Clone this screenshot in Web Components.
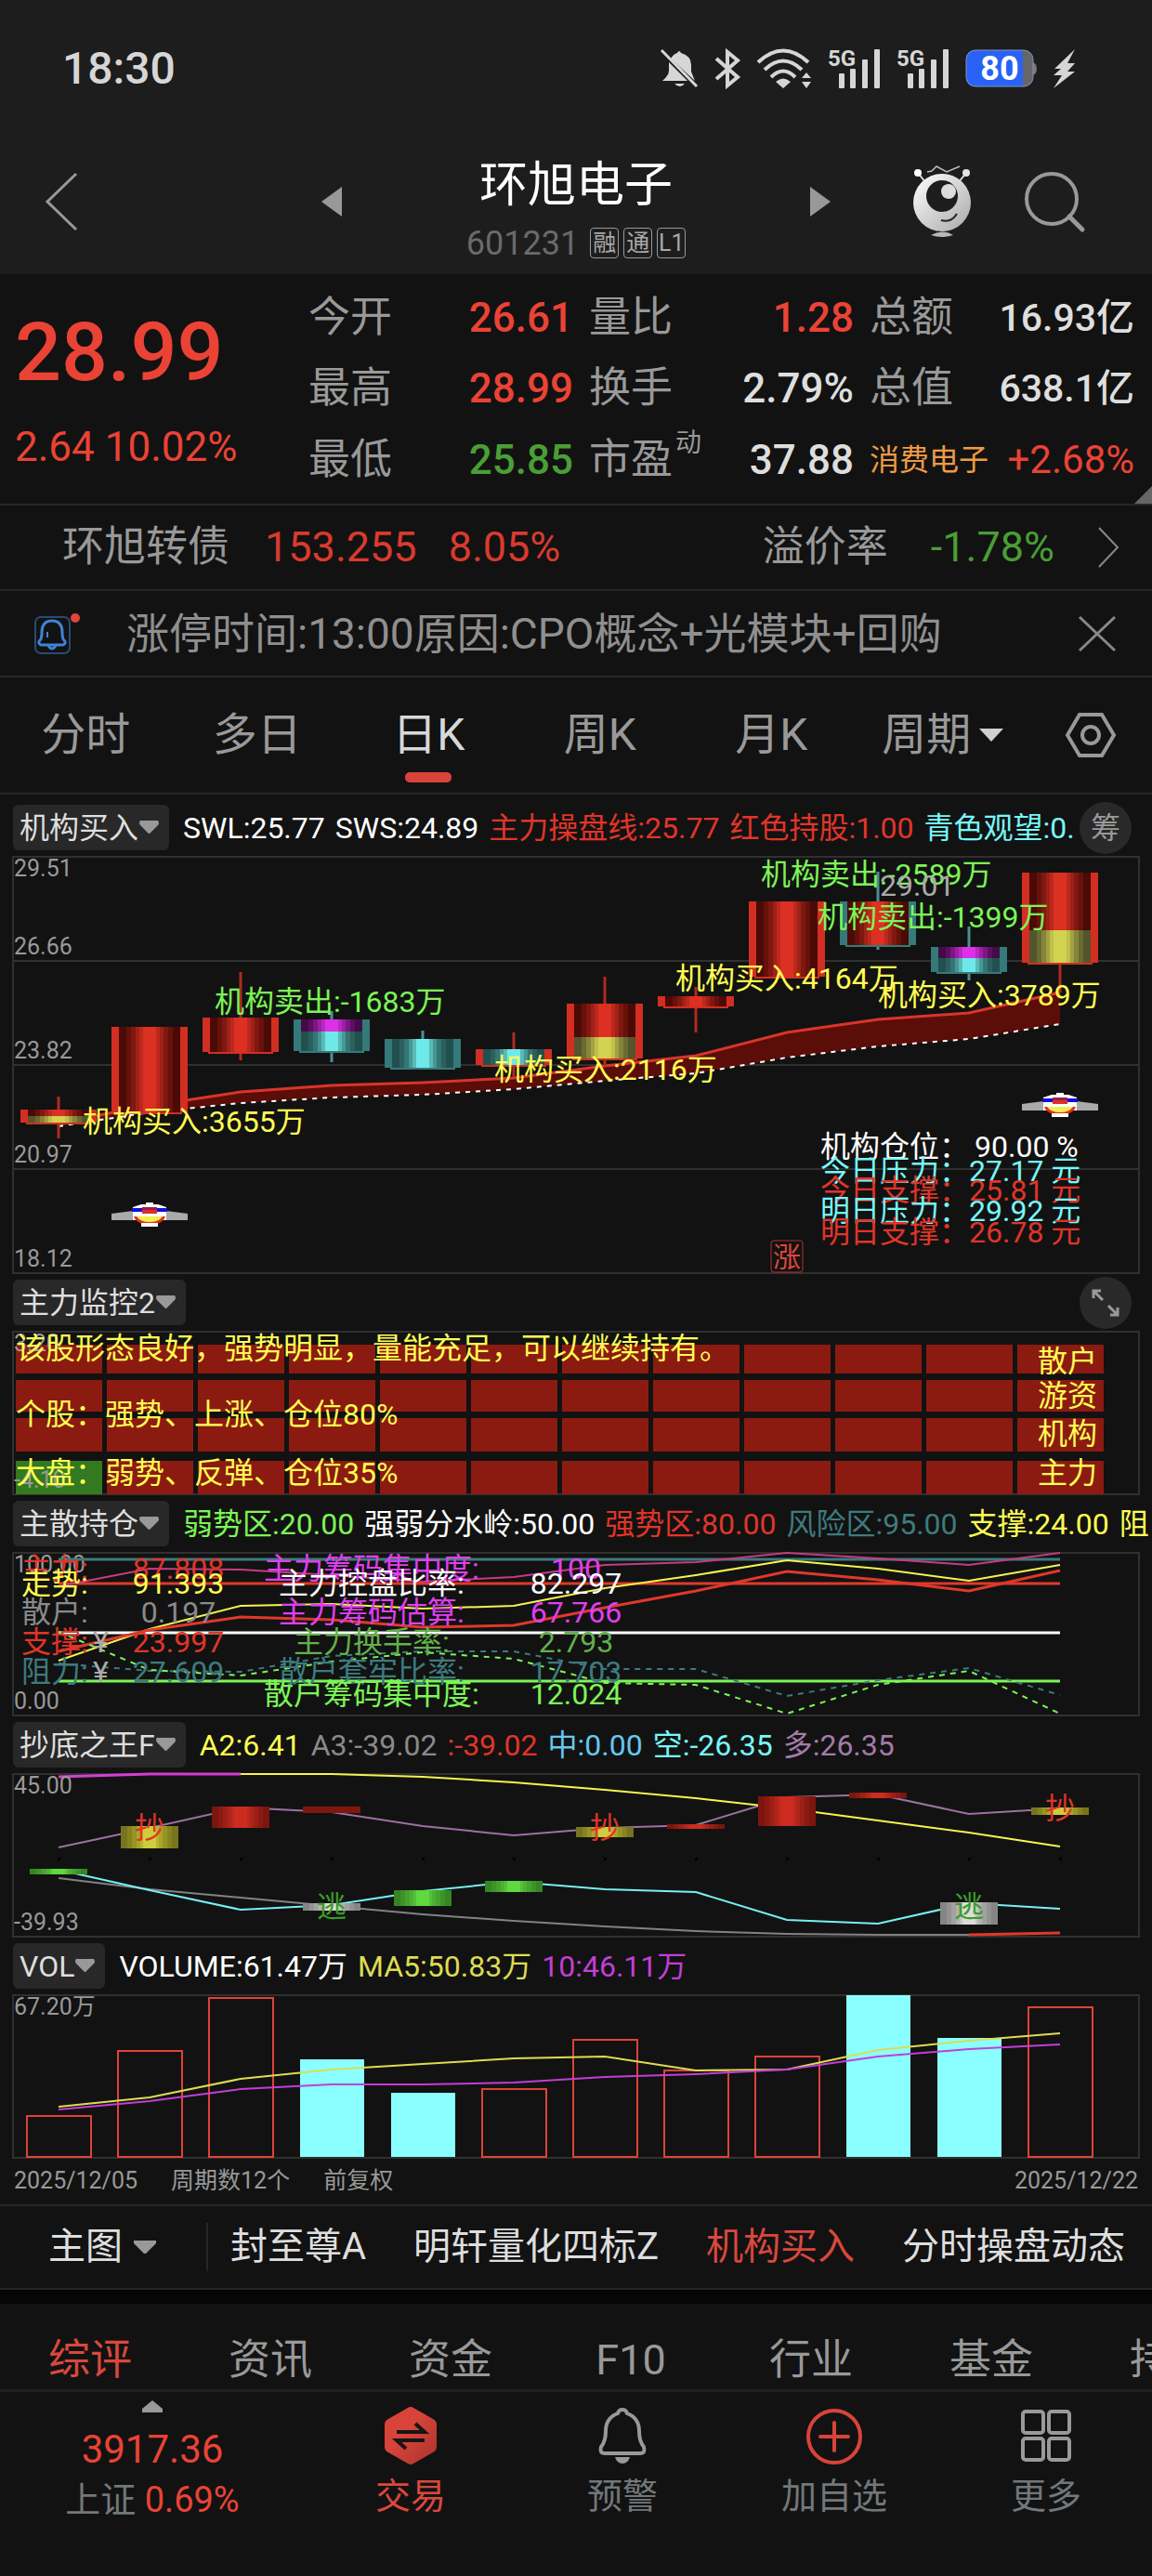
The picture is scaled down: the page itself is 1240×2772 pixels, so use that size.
<!DOCTYPE html>
<html lang="zh-CN">
<head>
<meta charset="utf-8">
<meta name="viewport" content="width=device-width, initial-scale=1">
<title>环旭电子 601231</title>
<style>
  html {
    background: #121212;
  }
  body {
    margin: 0;
    min-height: 100vh;
    overflow-x: hidden;
    color: #dedede;
    background: #121212;
    font-family: Roboto, "Noto Sans CJK SC", sans-serif;
    --up: #ea4335;
    --down: #4a9e35;
    --muted: #999;
    --line: #262626;
  }
  .white { color: #fff; }
  .red { color: #e03529; }
  .cyan { color: #77f7f9; }
  .yellow { color: #fffd54; }
  .green { color: #7cf557; }
  .teal { color: #3d7b7e; }
  .grey { color: #8a8a8a; }
  .blue { color: #66c8ee; }
  .mauve { color: #a47aa8; }
  .ma5 { color: #dddc52; }
  .ma10 { color: #c13fd6; }
</style>
</head>
<body>

<status-bar time="18:30" battery="80"></status-bar>
<title-bar code="601231">环旭电子</title-bar>

<quote-board price="28.99" change="2.64 10.02%">
  <quote-cell label="今开" trend="up">26.61</quote-cell>
  <quote-cell label="量比" trend="up">1.28</quote-cell>
  <quote-cell label="总额" amount>16.93亿</quote-cell>
  <quote-cell label="最高" trend="up">28.99</quote-cell>
  <quote-cell label="换手">2.79%</quote-cell>
  <quote-cell label="总值" amount>638.1亿</quote-cell>
  <quote-cell label="最低" trend="down">25.85</quote-cell>
  <quote-cell label="市盈" mark="动">37.88</quote-cell>
  <quote-cell label="消费电子" trend="up" sector>+2.68%</quote-cell>
</quote-board>

<bond-strip></bond-strip>
<notice-strip>涨停时间:13:00原因:CPO概念+光模块+回购</notice-strip>
<period-tabs></period-tabs>

<main>
  <indicator-panel name="机构买入" main>
    <span slot="legend" class="white">SWL:25.77</span>
    <span slot="legend" class="white">SWS:24.89</span>
    <span slot="legend" class="red">主力操盘线:25.77</span>
    <span slot="legend" class="red">红色持股:1.00</span>
    <span slot="legend" class="cyan">青色观望:0.</span>
    <round-button slot="action" label="筹码分布">筹</round-button>
    <candle-chart></candle-chart>
  </indicator-panel>

  <indicator-panel name="主力监控2">
    <round-button slot="action" label="全屏"></round-button>
    <monitor-chart></monitor-chart>
  </indicator-panel>

  <indicator-panel name="主散持仓">
    <span slot="legend" class="green">弱势区:20.00</span>
    <span slot="legend" class="white">强弱分水岭:50.00</span>
    <span slot="legend" class="red">强势区:80.00</span>
    <span slot="legend" class="teal">风险区:95.00</span>
    <span slot="legend" class="yellow">支撑:24.00</span>
    <span slot="legend" class="yellow">阻</span>
    <holding-chart></holding-chart>
  </indicator-panel>

  <indicator-panel name="抄底之王F">
    <span slot="legend" class="yellow">A2:6.41</span>
    <span slot="legend" class="grey">A3:-39.02</span>
    <span slot="legend" class="red">:-39.02</span>
    <span slot="legend" class="blue">中:0.00</span>
    <span slot="legend" class="cyan">空:-26.35</span>
    <span slot="legend" class="mauve">多:26.35</span>
    <bottom-chart></bottom-chart>
  </indicator-panel>

  <indicator-panel name="VOL">
    <span slot="legend" class="white">VOLUME:61.47万</span>
    <span slot="legend" class="ma5">MA5:50.83万</span>
    <span slot="legend" class="ma10">10:46.11万</span>
    <volume-chart></volume-chart>
  </indicator-panel>

  <date-range from="2025/12/05" to="2025/12/22">
    <span>周期数12个</span>
    <span>前复权</span>
  </date-range>
</main>

<indicator-switch></indicator-switch>
<info-tabs></info-tabs>
<bottom-nav></bottom-nav>

<script>
  (function() {

    const RESET = `
      :host, * { box-sizing: border-box; }
      button, a {
        margin: 0; padding: 0; border: 0;
        background: none; color: inherit;
        font: inherit; text-decoration: none; white-space: nowrap;
      }
      svg { display: block; flex: none; overflow: visible; }
    `;

    // base class: renders css() and html() into an open shadow root
    class BaseElement extends HTMLElement {
      connectedCallback() {
        if (this.shadowRoot) return;
        this.attachShadow({mode: "open"});
        this.shadowRoot.innerHTML = `<style>${RESET}${this.css()}</style>${this.html()}`;
      }
      css() { return ""; }
      html() { return ""; }
      attr(name) { return this.getAttribute(name) || ""; }
    }

    class StatusBar extends BaseElement {
      css() {
        return `
          :host {
            display: flex; align-items: center; gap: 17px;
            height: 148px; padding: 0 81px 0 67px;
            background: #1d1d1d; color: #d6d6d6;
          }
          time { margin-right: auto; font-size: 48px; font-weight: 500; line-height: 56px; }
          svg { fill: #d6d6d6; }
        `;
      }
      signal() {
        return `
          <svg width="57" height="44" viewBox="0 0 57 44">
            <text x="0" y="19" font-size="24" font-weight="700">5G</text>
            <rect x="12" y="27" width="6" height="16" rx="1"/>
            <rect x="24" y="22" width="6" height="21" rx="1"/>
            <rect x="37" y="12" width="6" height="31" rx="1"/>
            <rect x="50" y="1" width="6" height="42" rx="1"/>
          </svg>`;
      }
      html() {
        return `
          <time>${this.attr("time")}</time>
          <svg width="42" height="44" viewBox="0 0 42 44">
            <path d="M10 15v9q0 5-7 11h27zM12 11q3-5 7-6 2-4 4 0 11 3 11 13v7l4 10z"/>
            <path d="M16 38h11q-5 6-11 0z"/>
            <path d="M2 2 40 41" stroke="#d6d6d6" stroke-width="3"/>
          </svg>
          <svg width="28" height="44" viewBox="0 0 28 44">
            <path d="M2 11 25 31 14 40V4l11 9L2 33" fill="none" stroke="#d6d6d6" stroke-width="4"/>
          </svg>
          <svg width="60" height="44" viewBox="0 0 60 44">
            <g fill="none" stroke="#d6d6d6" stroke-width="4">
              <path d="M2 15q27-25 54 0"/>
              <path d="M9 23q20-19 40 0"/>
              <path d="M16 31q13-13 26 0"/>
            </g>
            <path d="M21 36q8-7 16 0l-8 7zM49 32l5-6 5 6zM49 36l5 7 5-7z"/>
          </svg>
          ${this.signal()}
          ${this.signal()}
          <svg width="77" height="42" viewBox="0 0 77 42">
            <path d="M72 14q5 1 5 7t-5 7z" fill="#777"/>
            <rect x="1" y="1" width="72" height="39" rx="10" fill="#666"/>
            <path d="M11 1h51v39H11Q1 40 1 30V11Q1 1 11 1z" fill="#2962f5"/>
            <rect x="1" y="1" width="72" height="39" rx="10" fill="none" stroke="#8294c4"/>
            <text x="37" y="33" font-size="36" font-weight="700" fill="#fff" text-anchor="middle">${this.attr("battery")}</text>
          </svg>
          <svg width="26" height="44" viewBox="0 0 26 44">
            <path d="M24 1 2 22h7l-8 7h9L1 43l23-18h-8l8-9h-8z"/>
          </svg>`;
      }
    }

    class TitleBar extends BaseElement {
      css() {
        return `
          :host {
            display: grid; grid-template-columns: 1fr 548px 1fr; align-items: center;
            height: 147px; background: #1d1d1d;
          }
          .back { justify-self: start; padding-left: 48px; }
          .switch { display: flex; align-items: center; justify-content: space-between; }
          .tools { display: flex; align-items: center; justify-content: flex-end; gap: 57px; padding-right: 72px; }
          button { margin-bottom: 10px; }
          .stock { display: flex; flex-direction: column; align-items: center; gap: 10px; }
          h1 { margin: 0; color: #fff; font-size: 52px; font-weight: 400; line-height: 70px; }
          .code { display: flex; align-items: center; gap: 5px; color: #6a6a6a; font-size: 36px; line-height: 34px; }
          .code span { margin-right: 7px; }
          .code b {
            width: 31px; height: 33px; border: 1px solid #999; border-radius: 4px;
            color: #a8a8a8; font-size: 25px; font-weight: 400; line-height: 31px; text-align: center;
          }
        `;
      }
      html() {
        return `
          <button class="back" aria-label="返回">
            <svg width="36" height="64" viewBox="0 0 36 64"><path d="M34 2 3 32l31 30" fill="none" stroke="#999" stroke-width="3"/></svg>
          </button>
          <div class="switch">
            <button aria-label="上一只"><svg width="22" height="32" viewBox="0 0 22 32"><path d="M0 16 22 0v32z" fill="#999"/></svg></button>
            <div class="stock">
              <h1><slot></slot></h1>
              <div class="code"><span>${this.attr("code")}</span><b>融</b><b>通</b><b>L1</b></div>
            </div>
            <button aria-label="下一只"><svg width="22" height="32" viewBox="0 0 22 32"><path d="M22 16 0 0v32z" fill="#999"/></svg></button>
          </div>
          <div class="tools">
            <button aria-label="智能助手">
              <svg width="62" height="77" viewBox="0 0 62 77">
                <linearGradient id="ball" x1="0" y1="0" x2="1" y2="1">
                  <stop offset="0" stop-color="#fff"/><stop offset="1" stop-color="#a8a8a8"/>
                </linearGradient>
                <path d="M5 8l8 10M57 8l-8 10" stroke="#ddd" stroke-width="2"/>
                <circle cx="5" cy="8" r="4" fill="#fff"/><circle cx="57" cy="8" r="4" fill="#e4e4e4"/>
                <path d="M15 7l5-1 5-5 11 6 14-6" fill="none" stroke="#bbb" stroke-width="1.5"/>
                <circle cx="31" cy="40" r="31" fill="url(#ball)"/>
                <circle cx="31" cy="33" r="17" fill="#1d1d1d"/>
                <circle cx="38" cy="28" r="8" fill="#dcdcdc"/>
                <path d="M30 59q11 3 17-7" fill="none" stroke="#222" stroke-width="2"/>
                <path d="M19 75q12-7 24 0-12 4-24 0z" fill="#b8b8b8"/>
              </svg>
            </button>
            <button aria-label="搜索">
              <svg width="66" height="66" viewBox="0 0 66 66">
                <g fill="none" stroke="#999" stroke-width="4"><circle cx="30" cy="30" r="27"/><path d="M49 49l14 14" stroke-width="5" stroke-linecap="round"/></g>
              </svg>
            </button>
          </div>`;
      }
    }

    class QuoteCell extends BaseElement {
      css() {
        return `
          :host {
            display: flex; align-items: center; justify-content: space-between;
            height: 76px; color: #dedede; font-size: 44px; line-height: 60px; white-space: nowrap;
          }
          :host([trend="up"]) { color: var(--up); }
          :host([trend="down"]) { color: var(--down); }
          .label { color: var(--muted); font-size: 45px; }
          :host([sector]) .label { color: #f09a45; font-size: 32px; }
          sup { position: relative; top: -24px; margin-left: 3px; font-size: 28px; line-height: 28px; vertical-align: baseline; }
          .value { font-weight: 500; }
          :host([sector]) .value { font-size: 42px; font-weight: 400; }
          :host([amount]) .value { font-size: 41px; }
        `;
      }
      html() {
        const mark = this.attr("mark") ? `<sup>${this.attr("mark")}</sup>` : "";
        return `<span class="label">${this.attr("label")}${mark}</span><span class="value"><slot></slot></span>`;
      }
    }

    class QuoteBoard extends BaseElement {
      css() {
        return `
          :host {
            position: relative; display: grid; grid-template-columns: 316px 1fr;
            padding: 9px 19px 9px 16px; border-bottom: 2px solid var(--line);
          }
          .last { padding-top: 25px; color: var(--up); }
          .price { font-size: 88px; font-weight: 500; line-height: 100px; }
          .change { font-size: 44px; line-height: 104px; }
          .cells { display: grid; grid-template-columns: repeat(3, 1fr); column-gap: 17px; }
          .corner { position: absolute; right: 0; bottom: 0; }
        `;
      }
      html() {
        return `
          <div class="last">
            <div class="price">${this.attr("price")}</div>
            <div class="change">${this.attr("change")}</div>
          </div>
          <div class="cells"><slot></slot></div>
          <svg class="corner" width="19" height="19" viewBox="0 0 19 19"><path d="M19 0v19H0z" fill="#666"/></svg>`;
      }
    }

    class BondStrip extends BaseElement {
      css() {
        return `
          :host { display: block; border-bottom: 2px solid var(--line); }
          a {
            display: flex; align-items: center; height: 90px; padding: 0 35px 0 67px;
            color: var(--muted); font-size: 45px; line-height: 60px;
          }
          .up { color: #d93a2f; margin-left: 38px; }
          .up + .up { margin-left: 34px; }
          .rate { margin-left: auto; }
          .down { color: var(--down); margin: 0 46px; }
        `;
      }
      html() {
        return `
          <a href="#bond">
            <span>环旭转债</span><span class="up">153.255</span><span class="up">8.05%</span>
            <span class="rate">溢价率</span><span class="down">-1.78%</span>
            <svg width="24" height="44" viewBox="0 0 24 44"><path d="M2 1l20 21L2 43" fill="none" stroke="#888" stroke-width="2"/></svg>
          </a>`;
      }
    }

    class NoticeStrip extends BaseElement {
      css() {
        return `
          :host {
            display: flex; align-items: center; height: 93px; padding: 0 38px 0 36px;
            border-bottom: 2px solid var(--line); color: #8f8f8f; font-size: 46px; line-height: 60px; white-space: nowrap;
          }
          p { flex: 1; margin: 0 0 0 49px; }
        `;
      }
      html() {
        return `
          <svg width="51" height="46" viewBox="0 0 51 46">
            <rect x="2" y="5" width="37" height="39" rx="6" fill="none" stroke="#2b4a72" stroke-width="2"/>
            <g fill="none" stroke="#3f83d8" stroke-width="3">
              <path d="M8 35q-4-2-1-5 2-2 2-8 0-13 11-13t11 13q0 6 2 8 3 3-1 5z"/>
              <path d="M15 21v6" stroke-width="2"/><path d="M16 36q4 6 8 0"/>
            </g>
            <circle cx="45" cy="6" r="5" fill="#e0453a"/>
          </svg>
          <p><slot></slot></p>
          <button aria-label="关闭"><svg width="42" height="40" viewBox="0 0 42 40"><path d="M2 2l38 36M40 2 2 38" stroke="#888" stroke-width="3"/></svg></button>`;
      }
    }

    class PeriodTabs extends BaseElement {
      css() {
        return `
          :host {
            display: grid; grid-template-columns: repeat(6, 1fr) 133px;
            height: 126px; border-bottom: 2px solid var(--line); color: var(--muted);
          }
          button {
            position: relative; display: flex; align-items: center; justify-content: center; gap: 9px;
            font-size: 48px; line-height: 60px;
          }
          .on { color: #d8d8d8; }
          .on::after {
            content: ""; position: absolute; bottom: 11px;
            width: 50px; height: 11px; border-radius: 5px; background: #d9433a;
          }
        `;
      }
      html() {
        const tabs = ["分时", "多日", "日K", "周K", "月K"];
        return tabs.map(t => `<button${t === "日K" ? ' class="on"' : ""}>${t}</button>`).join("") + `
          <button>周期<svg width="26" height="14" viewBox="0 0 26 14"><path d="M0 0h26L13 14z" fill="#d0d0d0"/></svg></button>
          <button aria-label="设置">
            <svg width="54" height="50" viewBox="0 0 54 50">
              <g fill="none" stroke="#999" stroke-width="4"><path d="M15 3h24l13 22-13 22H15L2 25z"/><circle cx="27" cy="25" r="9"/></g>
            </svg>
          </button>`;
      }
    }

    class RoundButton extends BaseElement {
      css() {
        return `
          :host { display: block; flex: none; }
          button {
            display: flex; align-items: center; justify-content: center;
            width: 56px; height: 56px; border-radius: 50%;
            background: #292929; color: #999; font-size: 32px; line-height: 40px;
          }
        `;
      }
      html() {
        const icon = `<svg width="30" height="30" viewBox="0 0 30 30"><path d="M2 10V2h8M3 3l9 9M28 20v8h-8M27 27l-9-9" fill="none" stroke="#999" stroke-width="3"/></svg>`;
        return `<button aria-label="${this.attr("label")}">${this.textContent ? "<slot></slot>" : icon}</button>`;
      }
    }

    class IndicatorPanel extends BaseElement {
      css() {
        return `
          :host { display: block; }
          header { display: flex; align-items: center; height: 63px; padding-left: 14px; }
          :host([main]) header { height: 67px; padding-top: 4px; }
          .chip {
            display: flex; align-items: center; gap: 1px; flex: none;
            height: 49px; padding: 0 11px 0 7px; border-radius: 6px;
            background: #282828; color: #dedede; font-size: 32px; line-height: 40px;
          }
          .legend {
            display: flex; flex: 1; gap: 11px; min-width: 0; margin-left: 15px; overflow: hidden;
            font-size: 32px; line-height: 44px; white-space: nowrap;
          }
          ::slotted([slot="legend"]) { flex: none; }
          ::slotted([slot="action"]) { margin-right: 22px; }
          .chart { padding: 0 14px; }
        `;
      }
      html() {
        return `
          <header>
            <button class="chip">${this.attr("name")}<svg width="21" height="15" viewBox="0 0 21 15"><path d="M1 0h19q2 3 0 5l-9 9h-1L1 5q-2-3 0-5z" fill="#999"/></svg></button>
            <div class="legend"><slot name="legend"></slot></div>
            <slot name="action"></slot>
          </header>
          <div class="chart"><slot></slot></div>`;
      }
    }

    // ---- charts: twelve trading days on one shared x axis ----

    const WIDTH = 1212;
    const cx = i => 49 + 98 * i;
    const points = (ys, from = 0) => ys.map((y, i) => `${cx(i + from)},${y}`).join(" ");
    const line = (ys, color, width = 2, extra = "", from = 0) =>
      `<polyline points="${points(ys, from)}" fill="none" stroke="${color}" stroke-width="${width}" ${extra}/>`;
    const text = (x, y, str, cls) => `<text x="${x}" y="${y}" class="${cls}">${str}</text>`;

    // column shading from dark edges to a bright middle, in hard steps
    const SHADES = {
      red: ["#4b0a05", "#66110a", "#7f1811", "#9f2117", "#bd281c", "#dc3022"],
      teal: ["#22504f", "#2b605f", "#357573", "#479795", "#5abab8", "#6ee9e9"],
      magenta: ["#450a48", "#5c1060", "#7c1781", "#9d1fa3", "#bb27c2", "#df30e8"],
      olive: ["#54552c", "#6a6b32", "#84853a", "#a2a243", "#c0c04b", "#d2d251"],
      ember: ["#7c150e", "#8a1a12", "#9b1f16", "#ae241a", "#bd281d", "#cc2c20"],
      gold: ["#76741c", "#86841f", "#969424", "#a8a52a", "#b8b52f", "#d0cd3c"],
      leaf: ["#358523", "#3d9328", "#45a22d", "#4db133", "#55c138", "#5fd93f"],
      silver: ["#858585", "#939393", "#a2a2a2", "#b2b2b2", "#c4c4c4", "#dcdcdc"]
    };
    const STEPS = [0, 12, 20, 27, 34, 39, 61, 66, 73, 80, 88, 100];

    function gradients(names) {
      return "<defs>" + names.map(name => {
        const s = SHADES[name];
        const bands = s.concat(s.slice(0, -1).reverse());
        const stops = bands.map((c, i) =>
          `<stop offset="${STEPS[i]}%" stop-color="${c}"/><stop offset="${STEPS[i + 1]}%" stop-color="${c}"/>`).join("");
        return `<linearGradient id="${name}">${stops}</linearGradient>`;
      }).join("") + "</defs>";
    }

    class ChartElement extends BaseElement {
      get chartHeight() { return 175; }
      css() {
        return `
          :host { display: block; }
          svg { width: 100%; height: auto; }
          text { font-size: 32px; white-space: pre; }
          .axis { font-size: 25px; fill: #999; }
          .grid { fill: none; stroke: #303030; stroke-width: 2; }
          .mid { text-anchor: middle; }
          .white { fill: #fff; } .red { fill: #e03529; } .cyan { fill: #77f7f9; }
          .yellow { fill: #fffd54; } .green { fill: #7cf557; } .teal { fill: #3d7b7e; }
          .grey { fill: #8a8a8a; } .magenta { fill: #e03ff0; } .moss { fill: #62b04c; }
          .leaf { fill: #3c9a28; } .silver { fill: #aaa; }
          .badge { font-size: 30px; fill: #d9483c; text-anchor: middle; }
        `;
      }
      html() {
        const h = this.chartHeight;
        return `
          <svg viewBox="0 0 ${WIDTH} ${h}">
            <rect class="grid" x="0" y="0" width="${WIDTH}" height="${h}"/>
            ${this.draw()}
          </svg>`;
      }
    }

    class CandleChart extends ChartElement {
      get chartHeight() { return 448; }

      // edge colour, shadow top and bottom, then body slices [shade, top, bottom]
      candle(i, edge, high, low, slices) {
        const x = cx(i) - 41;
        const color = edge === "red" ? "#d32e22" : "#35797a";
        const top = slices[0][1];
        const bottom = slices[slices.length - 1][2];
        const wick = edge === "red" ? "#b02a20" : "#4a9093";
        return `
          <path d="M${cx(i)} ${high}V${low}" stroke="${wick}" stroke-width="3"/>
          <rect x="${x}" y="${top}" width="82" height="${bottom - top}" fill="${color}"/>
          ${slices.map(s => `<rect x="${x + 8}" y="${s[1]}" width="66" height="${s[2] - s[1]}" fill="url(#${s[0]})"/>`).join("")}
          <path d="M${x + 6} ${bottom + 1}h70" stroke="${color}" stroke-width="2"/>`;
      }

      saucer(x, y) {
        return `
          <g transform="translate(${x} ${y})">
            <path d="M-41 12l23-3h36l23 3v7h-82z" fill="#a9a9a9"/>
            <path d="M-18 5l9-3h5V0h8v2h5l9 3v14h-36z" fill="#fff"/>
            <path d="M-19 6h38v4h-38z" fill="#1010d8"/>
            <path d="M-8 5H8v3H-8z" fill="#a01a50"/><path d="M-8 8H8v4H-8z" fill="#d8302a"/>
            <path d="M-17 15h34q-2 6-10 8h-14q-8-2-10-8z" fill="#e03020"/>
            <path d="M-14 15h28q-4 6-14 6t-14-6z" fill="#f6ee50"/>
            <path d="M-9 22H9v4H-9z" fill="#fff"/>
          </g>`;
      }

      draw() {
        const upper = [286, 268, 253, 246, 243, 238, 225, 214, 189, 175, 168, 146];
        const lower = [290, 275, 265, 259, 256, 250, 241, 233, 216, 204, 196, 180];
        const area = points(upper) + " " + points(lower).split(" ").reverse().join(" ");
        const levels = [
          ["今日压力：", "27.17 元", 349, "cyan"],
          ["今日支撑：", "25.81 元", 370, "red"],
          ["明日压力：", "29.92 元", 392, "cyan"],
          ["明日支撑：", "26.78 元", 415, "red"]
        ];
        return gradients(["red", "teal", "magenta", "olive"]) + `
          <path class="grid" d="M0 112H1212M0 224H1212M0 336H1212"/>
          ${["29.51", "26.66", "23.82", "20.97", "18.12"].map((v, i) => text(1, [21, 105, 217, 329, 441][i], v, "axis")).join("")}
          <polygon points="${area}" fill="#5b0d08"/>
          ${line(upper, "#d8352a", 3)}
          ${line(lower, "#fff", 2, 'stroke-dasharray="5 6"')}
          ${this.candle(0, "red", 258, 303, [["red", 272, 279], ["olive", 279, 286]])}
          ${this.candle(1, "red", 183, 275, [["red", 183, 275]])}
          ${this.candle(2, "red", 124, 219, [["red", 173, 210]])}
          ${this.candle(3, "teal", 166, 221, [["magenta", 175, 188], ["teal", 188, 209]])}
          ${this.candle(4, "teal", 187, 228, [["teal", 196, 227]])}
          ${this.candle(5, "red", 189, 237, [["teal", 207, 224]])}
          ${this.candle(6, "red", 129, 225, [["red", 158, 194], ["olive", 194, 217]])}
          ${this.candle(7, "red", 140, 189, [["red", 150, 161]])}
          ${this.candle(8, "red", 48, 130, [["red", 48, 129]])}
          ${this.candle(9, "teal", 16, 100, [["red", 48, 95]])}
          ${this.candle(10, "teal", 75, 133, [["magenta", 97, 109], ["teal", 109, 124]])}
          ${this.candle(11, "red", 17, 146, [["red", 17, 79], ["olive", 79, 114]])}
          ${text(217, 167, "机构卖出:-1683万", "green")}
          ${text(75, 296, "机构买入:3655万", "yellow")}
          ${text(518, 240, "机构买入:2116万", "yellow")}
          ${text(805, 30, "机构卖出:-2589万", "green")}
          ${text(933, 42, "29.01", "silver")}
          ${text(866, 76, "机构卖出:-1399万", "green")}
          ${text(713, 142, "机构买入:4164万", "yellow")}
          ${text(931, 160, "机构买入:3789万", "yellow")}
          ${this.saucer(147, 372)}
          ${this.saucer(1127, 254)}
          ${text(869, 323, "机构仓位：", "white")}${text(1035, 323, "90.00 %", "white")}
          ${levels.map(l => text(869, l[2], l[0], l[3]) + text(1029, l[2], l[1], l[3])).join("")}
          <rect x="816" y="413" width="34" height="34" rx="3" fill="#121212" stroke="#a8352c"/>
          ${text(833, 441, "涨", "badge")}`;
      }
    }

    class MonitorChart extends ChartElement {
      draw() {
        const rows = [[14, 31], [52, 34], [93, 36], [139, 36]];
        let cells = "";
        rows.forEach(([y, h], r) => {
          for (let i = 0; i < 12; i++) {
            const color = r === 3 && i === 0 ? "#33791f" : "#8b1b11";
            cells += `<rect x="${cx(i) - 46}" y="${y}" width="93" height="${h}" fill="${color}"/>`;
          }
        });
        return cells + `
          ${text(1, 21, "3.20", "axis")}
          ${text(1, 168, "-4.10", "axis")}
          ${text(3, 29, "该股形态良好，强势明显，量能充足，可以继续持有。", "yellow")}
          ${text(3, 100, "个股：强势、上涨、仓位80%", "yellow")}
          ${text(3, 163, "大盘：弱势、反弹、仓位35%", "yellow")}
          ${["散户", "游资", "机构", "主力"].map((s, i) => text(1103, [43, 80, 121, 163][i], s, "yellow")).join("")}`;
      }
    }

    class HoldingChart extends ChartElement {
      draw() {
        const flat = y => new Array(12).fill(y);
        const dash = 'stroke-dasharray="6 6"';
        const left = [
          ["主力:", "87.808", 28, "red"],
          ["走势:", "91.393", 44, "yellow"],
          ["散户:", "0.197", 75, "grey"],
          ["支撑:", "23.997", 107, "red"],
          ["阻力:", "27.609", 139, "teal"]
        ];
        const right = [
          ["主力筹码集中度:", "100", 28, "magenta"],
          ["主力控盘比率:", "82.297", 44, "white"],
          ["主力筹码估算:", "67.766", 75, "magenta"],
          ["主力换手率:", "2.793", 107, "moss"],
          ["散户套牢比率:", "17.703", 139, "teal"],
          ["散户筹码集中度:", "12.024", 163, "green"]
        ];
        return `
          ${text(1, 21, "100.00", "axis")}
          ${text(1, 168, "0.00", "axis")}
          ${line(flat(7), "#3d7b7e", 3)}
          ${line(flat(33), "#e0382b", 3)}
          ${line(flat(86), "#fff", 3)}
          ${line(flat(138), "#7cf557", 3)}
          ${line([36, 17, 18, 24, 31, 26, 13, 10, 0, 6, 13, 0], "#c83a80")}
          ${line([116, 82, 57, 55, 60, 57, 38, 24, 8, 17, 30, 13], "#f6f350")}
          ${line([106, 83, 69, 72, 80, 78, 59, 41, 20, 29, 41, 19], "#e0382b", 3)}
          ${line([119, 127, 128, 111, 106, 106, 125, 125, 154, 137, 124, 153], "#3d7b7e", 2, dash)}
          ${line([85, 126, 132, 117, 107, 114, 140, 142, 173, 142, 127, 173], "#7cf557", 2, dash)}
          ${left.map(l => text(9, l[2], l[0], l[3]) + text(178, l[2], l[1], l[3] + " mid")).join("")}
          ${text(86, 107, "¥", "silver")}${text(86, 139, "¥", "silver")}
          ${right.map(l => text(386, l[2], l[0], l[3] + " mid") + text(606, l[2], l[1], l[3] + " mid")).join("")}`;
      }
    }

    class BottomChart extends ChartElement {
      block(i, shade, top, bottom) {
        return `<rect x="${cx(i) - 31}" y="${top}" width="62" height="${bottom - top}" fill="url(#${shade})"/>`;
      }
      draw() {
        let ticks = "";
        for (let i = 0; i < 12; i++)
          ticks += `<rect x="${cx(i) - 1}" y="90" width="3" height="3" fill="#000"/>`;
        return gradients(["ember", "gold", "leaf", "silver"]) + ticks + `
          ${line([79, 58, 36, 41, 56, 66, 58, 55, 25, 22, 43, 37], "#9b71a1")}
          ${line([0, 0, 3, 9, 17, 26, 37, 50, 63, 78], "#f6f350", 2, "", 2)}
          ${line([3, 0, 0], "#d23fd2", 3)}
          ${line([112, 124, 133, 142, 151, 158, 164, 169, 172, 173, 173], "#828282")}
          ${line([173, 171], "#e0382b", 3, "", 10)}
          ${line([103, 125, 146, 141, 126, 116, 124, 127, 157, 161, 139, 145], "#77f0f2")}
          ${this.block(0, "leaf", 102, 108)}
          ${this.block(1, "gold", 56, 80)}
          ${this.block(2, "ember", 35, 58)}
          <rect x="${cx(3) - 31}" y="35" width="62" height="7" fill="#7f170f"/>
          ${this.block(3, "silver", 139, 147)}
          ${this.block(4, "leaf", 125, 142)}
          ${this.block(5, "leaf", 115, 127)}
          ${this.block(6, "gold", 57, 68)}
          ${this.block(7, "ember", 54, 59)}
          ${this.block(8, "ember", 24, 56)}
          ${this.block(9, "ember", 20, 26)}
          ${this.block(10, "silver", 138, 162)}
          ${this.block(11, "gold", 36, 44)}
          ${text(cx(1), 69, "抄", "red mid")}
          ${text(cx(6), 69, "抄", "red mid")}
          ${text(cx(11), 48, "抄", "red mid")}
          ${text(cx(3), 154, "逃", "leaf mid")}
          ${text(cx(10), 154, "逃", "leaf mid")}
          ${text(1, 21, "45.00", "axis")}
          ${text(1, 168, "-39.93", "axis")}`;
      }
    }

    class VolumeChart extends ChartElement {
      draw() {
        const tops = [130, 60, 3, 69, 105, 101, 48, 81, 66, 0, 46, 13];
        const falling = [3, 4, 9, 10];
        const bars = tops.map((y, i) => falling.includes(i)
          ? `<rect x="${cx(i) - 34}" y="${y}" width="69" height="${174 - y}" fill="#8affff"/>`
          : `<rect x="${cx(i) - 34}" y="${y}" width="69" height="${174 - y}" fill="none" stroke="#dd4337" stroke-width="2"/>`).join("");
        return bars + `
          ${line([120, 110, 90, 80, 74, 68, 66, 81, 80, 59, 49, 41], "#dddc52")}
          ${line([123, 114, 101, 96, 96, 94, 88, 85, 80, 66, 58, 53], "#c13fd6")}
          ${text(1, 21, "67.20万", "axis")}`;
      }
    }

    class DateRange extends BaseElement {
      css() {
        return `
          :host {
            display: flex; align-items: center; gap: 36px; height: 52px; padding: 0 15px;
            border-bottom: 2px solid var(--line); color: var(--muted); font-size: 25px; line-height: 32px;
          }
          .to { margin-left: auto; }
        `;
      }
      html() {
        return `<time>${this.attr("from")}</time><slot></slot><time class="to">${this.attr("to")}</time>`;
      }
    }

    class IndicatorSwitch extends BaseElement {
      css() {
        return `
          :host {
            display: flex; align-items: center; height: 90px; overflow: hidden;
            border-bottom: 2px solid var(--line); font-size: 40px; line-height: 52px;
          }
          .main {
            display: flex; align-items: center; gap: 12px; flex: none;
            width: 222px; padding-left: 52px;
          }
          nav { display: flex; gap: 51px; padding-left: 24px; border-left: 2px solid var(--line); }
          .on { color: #d9483d; }
        `;
      }
      html() {
        const names = ["封至尊A", "明轩量化四标Z", "机构买入", "分时操盘动态"];
        return `
          <button class="main">主图<svg width="24" height="14" viewBox="0 0 24 14"><path d="M0 0h24v3L13 14h-2L0 3z" fill="#999"/></svg></button>
          <nav>${names.map(n => `<button${n === "机构买入" ? ' class="on"' : ""}>${n}</button>`).join("")}</nav>`;
      }
    }

    class InfoTabs extends BaseElement {
      css() {
        return `
          :host {
            display: flex; padding-top: 30px; overflow: hidden;
            border-top: 15px solid #060606; border-bottom: 3px solid #1f1f1f;
            color: var(--muted); font-size: 45px; line-height: 62px;
          }
          button { flex: 0 0 194px; }
          .on { color: #d9483d; }
        `;
      }
      html() {
        const tabs = ["综评", "资讯", "资金", "F10", "行业", "基金", "持仓"];
        return tabs.map((t, i) => `<button${i === 0 ? ' class="on"' : ""}>${t}</button>`).join("");
      }
    }

    class BottomNav extends BaseElement {
      css() {
        return `
          :host {
            display: grid; grid-template-columns: 328px repeat(4, 1fr);
            color: #72777a; font-size: 38px; line-height: 44px;
          }
          button { display: flex; flex-direction: column; align-items: center; justify-content: flex-start; gap: 12px; padding-top: 16px; }
          .index { gap: 7px; padding-top: 9px; }
          .index strong { margin-top: 8px; color: var(--up); font-size: 42px; font-weight: 400; line-height: 50px; }
          .index em { color: var(--up); font-style: normal; }
          .trade { color: #d9483d; }
        `;
      }
      html() {
        return `
          <button class="index">
            <svg width="22" height="13" viewBox="0 0 22 13"><path d="M11 0 0 9v4h22V9z" fill="#999"/></svg>
            <strong>3917.36</strong>
            <span>上证 <em>0.69%</em></span>
          </button>
          <button class="trade">
            <svg width="56" height="62" viewBox="0 0 56 62">
              <linearGradient id="hex" x1="0" y1="0" x2="1" y2="1"><stop offset=".4" stop-color="#d9443a"/><stop offset="1" stop-color="#a8332c"/></linearGradient>
              <path d="M25 1q3-2 6 0l21 12q4 2 4 6v24q0 4-4 6L31 61q-3 2-6 0L4 49q-4-2-4-6V19q0-4 4-6z" fill="url(#hex)"/>
              <path d="M13 27h30L33 18M43 36H13l10 9" fill="none" stroke="#161616" stroke-width="4"/>
            </svg>
            交易
          </button>
          <button>
            <svg width="52" height="62" viewBox="0 0 52 62">
              <path d="M26 3q-4 0-5 4Q8 12 8 26q0 11-5 17-2 7 4 7h38q6 0 4-7-5-6-5-17 0-14-13-19-1-4-5-4z" fill="none" stroke="#999" stroke-width="4"/>
              <path d="M18 54h16q-2 7-8 7t-8-7z" fill="#999"/>
            </svg>
            预警
          </button>
          <button>
            <svg width="60" height="62" viewBox="0 0 60 62">
              <g fill="none" stroke="#d9433a" stroke-width="4"><circle cx="30" cy="32" r="28"/><path d="M30 17v30M15 32h30" stroke-linecap="round"/></g>
            </svg>
            加自选
          </button>
          <button>
            <svg width="56" height="62" viewBox="0 0 56 62">
              <g fill="none" stroke="#999" stroke-width="4">
                <rect x="3" y="5" width="22" height="23" rx="3"/><rect x="31" y="5" width="22" height="23" rx="3"/>
                <rect x="3" y="34" width="22" height="23" rx="3"/><rect x="31" y="34" width="22" height="23" rx="3"/>
              </g>
            </svg>
            更多
          </button>`;
      }
    }

    customElements.define("status-bar", StatusBar);
    customElements.define("title-bar", TitleBar);
    customElements.define("quote-board", QuoteBoard);
    customElements.define("quote-cell", QuoteCell);
    customElements.define("bond-strip", BondStrip);
    customElements.define("notice-strip", NoticeStrip);
    customElements.define("period-tabs", PeriodTabs);
    customElements.define("round-button", RoundButton);
    customElements.define("indicator-panel", IndicatorPanel);
    customElements.define("candle-chart", CandleChart);
    customElements.define("monitor-chart", MonitorChart);
    customElements.define("holding-chart", HoldingChart);
    customElements.define("bottom-chart", BottomChart);
    customElements.define("volume-chart", VolumeChart);
    customElements.define("date-range", DateRange);
    customElements.define("indicator-switch", IndicatorSwitch);
    customElements.define("info-tabs", InfoTabs);
    customElements.define("bottom-nav", BottomNav);

  })();
</script>
</body>
</html>
